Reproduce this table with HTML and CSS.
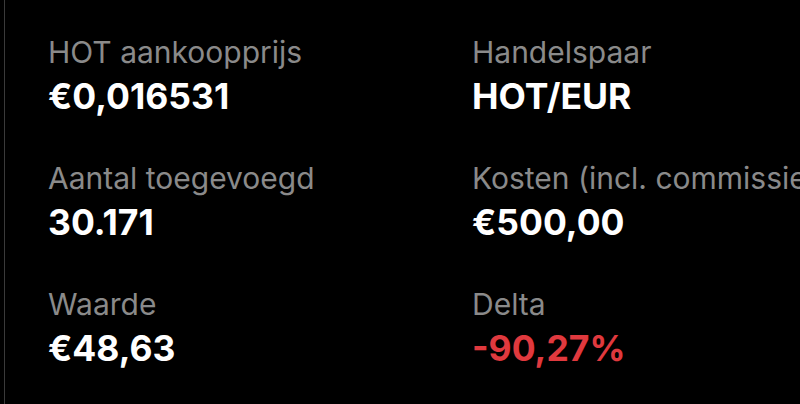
FILE: index.html
```html
<!DOCTYPE html>
<html lang="nl">
<head>
<meta charset="utf-8">
<link rel="stylesheet" href="styles.css">
</head>
<body>
<div class="panel">
  <div class="grid">
    <div class="item">
      <div class="label">HOT aankoopprijs</div>
      <div class="value">€0,016531</div>
    </div>
    <div class="item">
      <div class="label">Handelspaar</div>
      <div class="value">HOT/EUR</div>
    </div>
    <div class="item">
      <div class="label">Aantal toegevoegd</div>
      <div class="value">30.171</div>
    </div>
    <div class="item">
      <div class="label">Kosten (incl. commissie)</div>
      <div class="value">€500,00</div>
    </div>
    <div class="item">
      <div class="label">Waarde</div>
      <div class="value">€48,63</div>
    </div>
    <div class="item">
      <div class="label">Delta</div>
      <div class="value negative">-90,27%</div>
    </div>
  </div>
</div>
</body>
</html>
```
FILE: styles.css
```css
html, body {
  margin: 0;
  padding: 0;
  background: #000;
  width: 800px;
  height: 404px;
  overflow: hidden;
}
.panel {
  margin-left: 4px;
  height: 404px;
  border-left: 1px solid #3a3a3a;
  box-sizing: border-box;
  padding: 34px 0 0 43px;
  font-family: Inter, "Liberation Sans", sans-serif;
}
.grid {
  display: grid;
  grid-template-columns: 424px 424px;
  row-gap: 42px;
}
.item {
  display: flex;
  flex-direction: column;
  gap: 6px;
  white-space: nowrap;
  min-width: 0;
}
.label {
  color: #8a8a8a;
  font-size: 30px;
  line-height: 36px;
  font-weight: 400;
}
.value {
  color: #fff;
  font-size: 35.5px;
  line-height: 42px;
  font-weight: 700;
}
.value.negative {
  color: #e0393e;
}
```
